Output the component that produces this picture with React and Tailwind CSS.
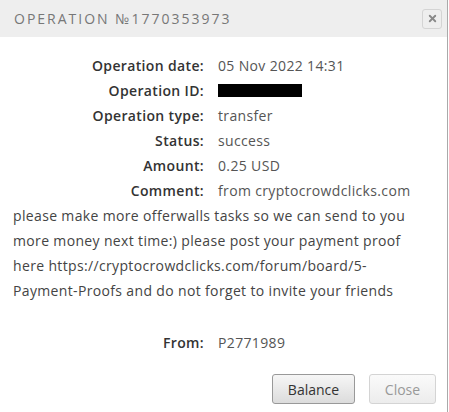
import { X } from 'lucide-react';

const rows = [
  ['Operation date:', '05 Nov 2022 14:31'],
  ['Operation ID:', null],
  ['Operation type:', 'transfer'],
  ['Status:', 'success'],
  ['Amount:', '0.25 USD'],
  ['Comment:', 'from cryptocrowdclicks.com'],
];

function Row({ label, value }) {
  return (
    <div className="flex h-[25px] items-center">
      <div className="w-[204px] shrink-0 text-right font-semibold text-[#333]">{label}</div>
      <div className="pl-[14px] text-[#555]">
        {value === null ? <span className="block h-[13px] w-[84px] bg-black" /> : value}
      </div>
    </div>
  );
}

export default function App() {
  return (
    <div
      className="h-[412px] w-[449px] overflow-hidden bg-white text-[14px] tracking-[0.35px] text-[#444]"
      style={{ fontFamily: "'Open Sans', 'Liberation Sans', sans-serif" }}
    >
      <div className="relative h-full w-[448px] border-r border-[#aaa]">
        {/* header */}
        <div className="flex h-[37px] items-center justify-between bg-[#eee] pl-[14px] pr-[5px]">
          <span className="text-[14px] tracking-[2px] text-[#777]">OPERATION №1770353973</span>
          <button className="flex h-[20px] w-[20px] items-center justify-center rounded-[3px] border border-[#d4d4d4] bg-[#eee]">
            <X size={11} strokeWidth={4} className="text-[#888]" />
          </button>
        </div>

        {/* details */}
        <div className="pt-[16px]">
          {rows.map(([l, v]) => (
            <Row key={l} label={l} value={v} />
          ))}
          <p className="w-[425px] px-[13px] leading-[25px]">
            please make more offerwalls tasks so we can send to you more money next time:) please post your payment proof here https://cryptocrowdclicks.com/forum/board/5-Payment-Proofs and do not forget to invite your friends
          </p>
          <div className="mt-[27px]">
            <Row label="From:" value="P2771989" />
          </div>
        </div>

        {/* footer buttons */}
        <div className="mt-[19px] flex justify-end gap-[14px] pr-[11px]">
          <button className="h-[30px] w-[83px] rounded-[3px] border border-[#999] bg-gradient-to-b from-[#f6f6f6] to-[#dcdcdc] tracking-normal text-[#333]">
            Balance
          </button>
          <button className="h-[30px] w-[67px] rounded-[3px] border border-[#d4d4d4] bg-gradient-to-b from-[#fafafa] to-[#ececec] tracking-normal text-[#999]">
            Close
          </button>
        </div>
      </div>
    </div>
  );
}
